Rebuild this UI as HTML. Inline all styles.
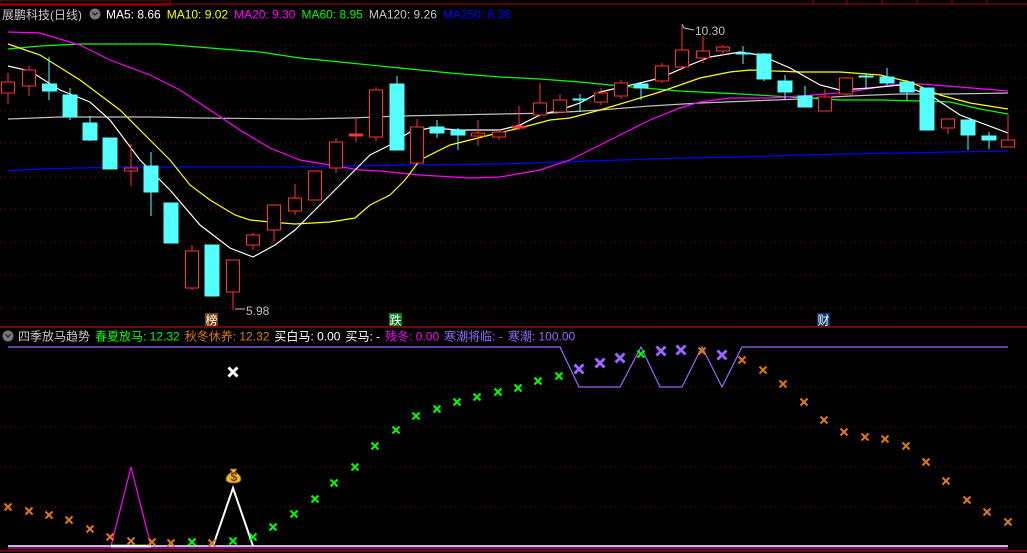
<!DOCTYPE html>
<html><head><meta charset="utf-8"><style>
html,body{margin:0;padding:0;background:#000;width:1027px;height:553px;overflow:hidden}
svg{display:block}
text{font-family:"Liberation Sans","Noto Sans CJK SC",sans-serif;font-size:12px}
</style></head><body>
<svg width="1027" height="553" viewBox="0 0 1027 553" xmlns="http://www.w3.org/2000/svg">
<defs>
<path id="xs" d="M-3.5,-3.5 L3.5,3.5 M3.5,-3.5 L-3.5,3.5" stroke-width="2"/>
<path id="xb" d="M-4.5,-4.5 L4.5,4.5 M4.5,-4.5 L-4.5,4.5" stroke-width="3"/>
</defs>
<rect width="1027" height="553" fill="#000"/>
<line x1="0" y1="4" x2="1027" y2="4" stroke="#a00" stroke-width="1"/>
<g stroke="#a00"><line x1="813" y1="0" x2="813" y2="4"/><line x1="847" y1="0" x2="847" y2="4"/><line x1="882" y1="0" x2="882" y2="4"/><line x1="917" y1="0" x2="917" y2="4"/><line x1="952" y1="0" x2="952" y2="4"/><line x1="987" y1="0" x2="987" y2="4"/></g>
<line x1="0" y1="327" x2="1027" y2="327" stroke="#b00" stroke-width="1.2"/>
<line x1="0" y1="551" x2="1027" y2="551" stroke="#b00" stroke-width="1.2"/>
<g stroke="#8a0000" stroke-dasharray="1,4" stroke-width="1">
<line x1="0" y1="45" x2="1027" y2="45"/><line x1="0" y1="78" x2="1027" y2="78"/><line x1="0" y1="111" x2="1027" y2="111"/><line x1="0" y1="143" x2="1027" y2="143"/><line x1="0" y1="177" x2="1027" y2="177"/><line x1="0" y1="209" x2="1027" y2="209"/><line x1="0" y1="242" x2="1027" y2="242"/><line x1="0" y1="275" x2="1027" y2="275"/><line x1="0" y1="308" x2="1027" y2="308"/>
<line x1="0" y1="387" x2="1027" y2="387"/><line x1="0" y1="427" x2="1027" y2="427"/><line x1="0" y1="467" x2="1027" y2="467"/><line x1="0" y1="507" x2="1027" y2="507"/>
</g>
<g fill="none" stroke-width="1.2">
<polyline stroke="#0000ff" points="8,171 40,169 80,168 120,167 200,167 300,167 350,166 400,165 500,164 560,162 620,160 680,158 740,157 800,155 850,154 900,153 950,152 1008,151"/>
<polyline stroke="#c0c0c0" points="8,119 60,117 150,117 200,118 300,119 350,118 400,116 450,115 500,114 550,113 600,110 650,106 700,103 750,101 800,99 850,96 900,94 950,94 1008,93"/>
<polyline stroke="#00ff00" points="8,49 40,46 80,44 160,44 210,48 260,52 300,58 350,63 400,68 450,73 500,77 540,79 580,82 620,86 680,91 740,94 790,97 840,100 880,100 920,101 950,102 980,109 1008,114"/>
<polyline stroke="#ff00ff" points="8,32 40,33 80,45 110,60 150,75 180,90 210,110 240,130 270,148 300,160 330,165 360,170 380,171 420,175 470,178 500,177 540,170 570,160 590,150 620,135 650,120 680,108 700,102 730,98 770,98 800,96 850,92 890,85 920,84 960,87 1008,91"/>
<polyline stroke="#ffff00" points="8,44 40,55 80,80 120,110 150,140 170,160 190,185 210,200 235,215 250,220 270,222 295,224 330,222 355,218 370,205 390,195 405,180 420,160 450,145 490,135 520,128 550,120 570,118 600,110 640,98 660,92 700,78 730,72 750,70 800,72 840,72 880,75 910,82 940,95 970,103 1008,109"/>
<polyline stroke="#ffffff" points="8,66 30,71 60,90 90,102 110,120 140,160 170,190 200,225 230,248 253,257 275,245 295,230 315,210 340,185 370,155 390,145 410,132 430,128 460,130 500,130 520,125 540,115 560,110 580,103 600,92 640,83 660,78 690,65 710,57 740,52 760,55 790,68 820,85 840,90 870,88 900,85 930,95 960,115 1008,133"/>
</g>
<g stroke-width="1">
<g stroke="#ff3333" fill="#000">
<line x1="8" y1="73" x2="8" y2="104"/><rect x="1.5" y="82" width="13" height="11"/>
<line x1="29" y1="66" x2="29" y2="96"/><rect x="22.5" y="70" width="13" height="16"/>
<line x1="131" y1="144" x2="131" y2="186"/><rect x="124.5" y="168" width="13" height="3"/>
<line x1="192" y1="245" x2="192" y2="290"/><rect x="185.5" y="251" width="13" height="37"/>
<line x1="233" y1="260" x2="233" y2="310"/><rect x="226.5" y="260" width="13" height="32"/>
<line x1="253" y1="233" x2="253" y2="250"/><rect x="246.5" y="235" width="13" height="10"/>
<line x1="274" y1="204" x2="274" y2="242"/><rect x="267.5" y="205" width="13" height="25"/>
<line x1="295" y1="184" x2="295" y2="215"/><rect x="288.5" y="198" width="13" height="13"/>
<line x1="315" y1="171" x2="315" y2="200"/><rect x="308.5" y="171" width="13" height="29"/>
<line x1="336" y1="138" x2="336" y2="173"/><rect x="329.5" y="142" width="13" height="26"/>
<line x1="356" y1="117" x2="356" y2="142"/><rect x="349.5" y="134" width="13" height="2" fill="#ff3333"/>
<line x1="376" y1="87" x2="376" y2="141"/><rect x="369.5" y="90" width="13" height="47"/>
<line x1="417" y1="119" x2="417" y2="163"/><rect x="410.5" y="127" width="13" height="36"/>
<line x1="478" y1="120" x2="478" y2="146"/><rect x="471.5" y="133" width="13" height="3"/>
<line x1="499" y1="129" x2="499" y2="140"/><rect x="492.5" y="132" width="13" height="5"/>
<line x1="519" y1="106" x2="519" y2="130"/><rect x="512.5" y="126" width="13" height="2" fill="#ff3333"/>
<line x1="540" y1="83" x2="540" y2="117"/><rect x="533.5" y="103" width="13" height="12"/>
<line x1="560" y1="94" x2="560" y2="113"/><rect x="553.5" y="100" width="13" height="12"/>
<line x1="601" y1="88" x2="601" y2="105"/><rect x="594.5" y="93" width="13" height="9"/>
<line x1="621" y1="80" x2="621" y2="99"/><rect x="614.5" y="83" width="13" height="13"/>
<line x1="662" y1="63" x2="662" y2="83"/><rect x="655.5" y="66" width="13" height="15"/>
<line x1="682" y1="26" x2="682" y2="70"/><rect x="675.5" y="50" width="13" height="17"/>
<line x1="703" y1="36" x2="703" y2="63"/><rect x="696.5" y="51" width="13" height="7"/>
<line x1="723" y1="45" x2="723" y2="56"/><rect x="716.5" y="47" width="13" height="4"/>
<line x1="825" y1="89" x2="825" y2="111"/><rect x="818.5" y="97" width="13" height="14"/>
<line x1="846" y1="77" x2="846" y2="95"/><rect x="839.5" y="78" width="13" height="16"/>
<line x1="948" y1="119" x2="948" y2="134"/><rect x="941.5" y="119" width="13" height="9"/>
<line x1="1008" y1="114" x2="1008" y2="147"/><rect x="1001.5" y="140" width="13" height="7"/>
</g>
<g stroke="#55ffff" fill="#55ffff">
<line x1="49" y1="57" x2="49" y2="100"/><rect x="42.5" y="84" width="14" height="7"/>
<line x1="70" y1="88" x2="70" y2="120"/><rect x="63" y="95" width="14" height="22"/>
<line x1="90" y1="116" x2="90" y2="141"/><rect x="83" y="123" width="14" height="17"/>
<rect x="103" y="138" width="14" height="31"/>
<line x1="151" y1="152" x2="151" y2="216"/><rect x="144" y="166" width="14" height="26"/>
<rect x="164" y="203" width="14" height="40"/>
<rect x="205" y="245" width="14" height="51"/>
<line x1="397" y1="76" x2="397" y2="150"/><rect x="390" y="84" width="14" height="66"/>
<line x1="437" y1="120" x2="437" y2="138"/><rect x="430" y="127" width="14" height="6"/>
<line x1="458" y1="128" x2="458" y2="150"/><rect x="451" y="130" width="14" height="5"/>
<line x1="580" y1="94" x2="580" y2="112"/><rect x="573" y="99" width="14" height="1"/>
<line x1="641" y1="84" x2="641" y2="100"/><rect x="634" y="84" width="14" height="4"/>
<line x1="743" y1="46" x2="743" y2="64"/><rect x="736" y="53" width="14" height="1"/>
<line x1="764" y1="53" x2="764" y2="81"/><rect x="757" y="54" width="14" height="25"/>
<line x1="785" y1="75" x2="785" y2="99"/><rect x="778" y="81" width="14" height="11"/>
<line x1="805" y1="86" x2="805" y2="107"/><rect x="798" y="96" width="14" height="11"/>
<line x1="866" y1="73" x2="866" y2="88"/><rect x="859" y="76" width="14" height="1"/>
<line x1="887" y1="68" x2="887" y2="85"/><rect x="880" y="77" width="14" height="6"/>
<line x1="907" y1="80" x2="907" y2="100"/><rect x="900" y="82" width="14" height="10"/>
<rect x="920" y="88" width="14" height="42"/>
<line x1="968" y1="120" x2="968" y2="150"/><rect x="961" y="120" width="14" height="15"/>
<line x1="989" y1="132" x2="989" y2="149"/><rect x="982" y="136" width="14" height="4"/>
</g>
</g>
<text x="695" y="35" fill="#c0c0c0">10.30</text>
<polyline points="694,30 684,28 682,24" fill="none" stroke="#c0c0c0"/>
<text x="246" y="315" fill="#c0c0c0">5.98</text>
<line x1="235" y1="309" x2="245" y2="309" stroke="#c0c0c0"/>
<rect x="205" y="313" width="13" height="13" fill="#7a3f0d"/><text x="205.5" y="324.5" fill="#fff">榜</text>
<rect x="389" y="313" width="13" height="13" fill="#0a7a1a"/><text x="389.5" y="324.5" fill="#fff">跌</text>
<rect x="817" y="313" width="13" height="13" fill="#0b3a6a"/><text x="817.5" y="324.5" fill="#fff">财</text>
<rect x="0" y="0" width="170" height="5" fill="none" stroke="#a00"/>
<text x="2" y="19" fill="#c8c8c8" font-size="13">展鹏科技(日线)</text>
<circle cx="95" cy="14" r="5.5" fill="#777"/><path d="M92.5,12.5 L95,15 L97.5,12.5" stroke="#222" fill="none" stroke-width="1.3"/>
<text x="106" y="18.5"><tspan fill="#fff">MA5: 8.66</tspan><tspan fill="#ffff00" dx="6">MA10: 9.02</tspan><tspan fill="#ff00ff" dx="6">MA20: 9.30</tspan><tspan fill="#00ff00" dx="6">MA60: 8.95</tspan><tspan fill="#c8c8c8" dx="6">MA120: 9.26</tspan><tspan fill="#0000ff" dx="6">MA250: 8.38</tspan></text>
<circle cx="8" cy="336" r="5.5" fill="#777"/><path d="M5.5,334.5 L8,337 L10.5,334.5" stroke="#222" fill="none" stroke-width="1.3"/>
<text x="18" y="340.5"><tspan fill="#c8c8c8">四季放马趋势</tspan><tspan fill="#00ff00" dx="5">春夏放马: 12.32</tspan><tspan fill="#e07818" dx="5">秋冬休养: 12.32</tspan><tspan fill="#fff" dx="5">买白马: 0.00</tspan><tspan fill="#fff" dx="5">买马: -</tspan><tspan fill="#ff00ff" dx="5">残冬: 0.00</tspan><tspan fill="#9966ff" dx="5">寒潮将临: -</tspan><tspan fill="#9966ff" dx="5">寒潮: 100.00</tspan></text>
<polyline fill="none" stroke="#9966ff" stroke-width="1.2" points="8,347 560,347 579,387 620,387 641,347 660,387 682,387 702,347 722,387 742,347 1008,347"/>
<line x1="8" y1="548" x2="1008" y2="548" stroke="#ff00ff" stroke-width="1"/>
<line x1="8" y1="546" x2="1008" y2="546" stroke="#fff" stroke-width="1.5"/>
<polyline fill="none" stroke="#ff00ff" stroke-width="1.2" points="111,546 131,467 151,546"/>
<line x1="111" y1="546" x2="151" y2="546" stroke="#fff" stroke-width="2.5"/>
<polyline fill="none" stroke="#fff" stroke-width="2" points="213,546 233,488 253,546"/>
<path d="M230,469 h7 l-2,3 q6,3 6,7 q0,4 -7.5,4 q-7.5,0 -7.5,-4 q0,-4 6,-7 z" fill="#e8b830" stroke="#8a5a00" stroke-width="0.8"/>
<text x="230.5" y="481" fill="#7a3a00" font-size="9" font-weight="bold">$</text>
<g stroke="#e07818">
<use href="#xs" x="8" y="507"/><use href="#xs" x="29" y="511"/><use href="#xs" x="49" y="515"/><use href="#xs" x="69" y="520"/><use href="#xs" x="90" y="529"/><use href="#xs" x="110" y="537"/><use href="#xs" x="131" y="541"/><use href="#xs" x="152" y="542"/><use href="#xs" x="171" y="543"/><use href="#xs" x="212" y="543"/>
<use href="#xs" x="702" y="351"/><use href="#xs" x="742" y="360"/><use href="#xs" x="763" y="370"/><use href="#xs" x="783" y="384"/><use href="#xs" x="804" y="402"/><use href="#xs" x="824" y="420"/><use href="#xs" x="844" y="432"/><use href="#xs" x="865" y="437"/><use href="#xs" x="885" y="439"/><use href="#xs" x="906" y="446"/><use href="#xs" x="926" y="462"/><use href="#xs" x="946" y="481"/><use href="#xs" x="967" y="500"/><use href="#xs" x="987" y="512"/><use href="#xs" x="1008" y="522"/>
</g>
<g stroke="#00ff00">
<use href="#xs" x="192" y="542"/><use href="#xs" x="233" y="541"/><use href="#xs" x="253" y="537"/><use href="#xs" x="273" y="527"/><use href="#xs" x="294" y="514"/><use href="#xs" x="315" y="499"/><use href="#xs" x="334" y="483"/><use href="#xs" x="355" y="467"/><use href="#xs" x="375" y="446"/><use href="#xs" x="396" y="430"/><use href="#xs" x="416" y="416"/><use href="#xs" x="437" y="409"/><use href="#xs" x="457" y="402"/><use href="#xs" x="477" y="397"/><use href="#xs" x="498" y="392"/><use href="#xs" x="518" y="388"/><use href="#xs" x="538" y="381"/><use href="#xs" x="559" y="376"/><use href="#xs" x="641" y="354"/>
</g>
<g stroke="#9966ff">
<use href="#xb" x="579" y="369"/><use href="#xb" x="600" y="363"/><use href="#xb" x="620" y="358"/><use href="#xb" x="661" y="351"/><use href="#xb" x="681" y="350"/><use href="#xb" x="722" y="355"/>
</g>
<use href="#xb" x="233" y="372" stroke="#fff"/>
</svg>
</body></html>
